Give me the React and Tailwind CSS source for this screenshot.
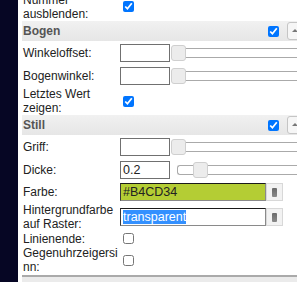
import { twMerge } from "tailwind-merge";

const Check = ({ checked = false }) => (
  <input
    type="checkbox"
    defaultChecked={checked}
    className="m-0 ml-[3px] h-[11px] w-[11px] accent-[#0075ff]"
  />
);

const Row = ({ label, className = "", children }) => (
  <div className={twMerge("flex shrink-0 items-center", className)}>
    <div className="w-[98px] shrink-0 pl-[1px] leading-[14px] break-words">{label}</div>
    <div className="flex flex-1 items-center">{children}</div>
  </div>
);

const Field = ({ value = "" }) => (
  <div className="h-[18px] w-[50px] shrink-0 border border-[#707070] bg-white pl-[2px] text-[12.5px] leading-[16px]">
    {value}
  </div>
);

const Slider = ({ at = -7, className = "" }) => (
  <div
    className={twMerge(
      "relative ml-[7px] h-[10px] w-[140px] shrink-0 rounded-l-[3px] border border-r-0 border-[#aaa] bg-white",
      className
    )}
  >
    <div
      className="absolute top-[-4px] h-[16px] w-[15px] rounded-[3px] border border-[#cfcfcf] bg-[#ececec]"
      style={{ left: at }}
    />
  </div>
);

const SectionHead = ({ title }) => (
  <div className="flex h-[20px] shrink-0 items-center bg-linear-to-b from-[#f1f1f1] to-[#e6e6e6] pl-[1px]">
    <span className="font-bold text-[#555]">{title}</span>
    <input
      type="checkbox"
      defaultChecked
      className="m-0 ml-auto h-[11px] w-[11px] accent-[#0075ff]"
    />
    <div className="ml-[8px] mr-[1px] flex h-[18px] w-[20px] items-center justify-center rounded-[3px] border border-[#c5c5c5] bg-[#f6f6f6]">
      <span className="mr-[4px] mb-[1px] h-0 w-0 border-x-[3px] border-b-[3px] border-x-transparent border-b-[#777]" />
    </div>
  </div>
);

const ColorField = ({ value, green = false }) => (
  <div className="flex">
    <div
      className={twMerge(
        "h-[18px] w-[146px] shrink-0 border border-t-[#1a1a1a] border-l-[#3a3a3a] border-r-[#8a8a8a] border-b-[#8a8a8a] pl-[2px] text-[12.5px] leading-[16px]",
        green ? "bg-[#b4cd34]" : "bg-white"
      )}
    >
      {green ? value : <span className="bg-[#3390ff] text-white">{value}</span>}
    </div>
    <div className="flex h-[18px] w-[17px] items-center justify-center border border-[#d8d8d8] bg-[#f2f2f2]">
      <span className="h-[9px] w-[5px] rounded-[1px] bg-linear-to-b from-[#6a6a6a] to-[#8a8a8a]" />
    </div>
  </div>
);

export default function App() {
  return (
    <div className="flex h-[282px] w-[297px] overflow-hidden bg-white font-['Liberation_Sans',Arial,sans-serif] text-[12px] text-[#222]">
      <div className="w-[18px] shrink-0 bg-[#060624]" />
      <div className="flex w-[292px] shrink-0 flex-col pl-[4px] pr-[2px]">
        <Row label="Nummer ausblenden:" className="-mt-[8px] h-[29px]">
          <Check checked />
        </Row>
        <SectionHead title="Bogen" />
        <Row label="Winkeloffset:" className="h-[23px]">
          <Field />
          <Slider />
        </Row>
        <Row label="Bogenwinkel:" className="h-[23px]">
          <Field />
          <Slider />
        </Row>
        <Row label="Letztes Wert zeigen:" className="h-[28px]">
          <Check checked />
        </Row>
        <SectionHead title="Still" />
        <Row label="Griff:" className="h-[23px]">
          <Field />
          <Slider />
        </Row>
        <Row label="Dicke:" className="h-[23px]">
          <Field value="0.2" />
          <Slider at={15} />
        </Row>
        <Row label="Farbe:" className="h-[22px]">
          <ColorField value="#B4CD34" green />
        </Row>
        <Row label="Hintergrundfarbe auf Raster:" className="h-[28px]">
          <ColorField value="transparent" />
        </Row>
        <Row label="Linienende:" className="h-[15px]">
          <Check />
        </Row>
        <Row label="Gegenuhrzeigersinn:" className="h-[28px]">
          <Check />
        </Row>
        <div className="mt-[1px] h-[12px] shrink-0 border-t-2 border-[#aaa] bg-[#ebebeb]" />
      </div>
    </div>
  );
}
